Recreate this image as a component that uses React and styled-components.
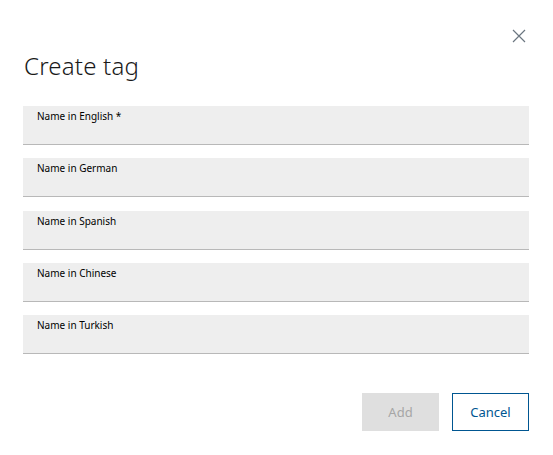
import styled, { createGlobalStyle } from "styled-components";

const GlobalStyle = createGlobalStyle`
  html, body {
    margin: 0;
    padding: 0;
    background: #ffffff;
    font-family: "Noto Sans", "Liberation Sans", sans-serif;
  }
`;

const Dialog = styled.div`
  width: 553px;
  height: 455px;
  box-sizing: border-box;
  padding: 24px 24px 0 23px;
  background: #ffffff;
  display: flex;
  flex-direction: column;
  position: relative;
`;

const CloseButton = styled.button`
  position: absolute;
  top: 28px;
  right: 26px;
  width: 16px;
  height: 16px;
  padding: 0;
  border: none;
  background: transparent;
  display: flex;
  align-items: center;
  justify-content: center;
  cursor: pointer;
`;

const Title = styled.h1`
  margin: 26px 0 0 1px;
  font-size: 24px;
  font-weight: 300;
  line-height: 32px;
  color: #1a1a1a;
  letter-spacing: 0.2px;
`;

const Form = styled.div`
  margin-top: 24px;
  display: flex;
  flex-direction: column;
  gap: 13.25px;
`;

const Field = styled.label`
  height: 39px;
  box-sizing: border-box;
  background: #eeeeee;
  border-bottom: 1px solid #b8b8b8;
  padding: 3px 14px 0;
  display: flex;
  flex-direction: column;
`;

const FieldLabel = styled.span`
  font-size: 10px;
  line-height: 14px;
  color: #000000;
`;

const Input = styled.input`
  border: none;
  background: transparent;
  outline: none;
  padding: 0;
  font: inherit;
  font-size: 12px;
`;

const Actions = styled.div`
  margin-top: 39px;
  display: flex;
  justify-content: flex-end;
  gap: 13px;
`;

const ActionButton = styled.button`
  width: 77px;
  height: 38px;
  box-sizing: border-box;
  font-family: "Noto Sans", "Liberation Sans", sans-serif;
  font-size: 13px;
  border: 1px solid ${(p) => (p.$primary ? "#dfdfdf" : "#005691")};
  background: ${(p) => (p.$primary ? "#dfdfdf" : "#ffffff")};
  color: ${(p) => (p.$primary ? "#a6a6a6" : "#005691")};
  cursor: ${(p) => (p.$primary ? "default" : "pointer")};
`;

const fields = [
  "Name in English *",
  "Name in German",
  "Name in Spanish",
  "Name in Chinese",
  "Name in Turkish",
];

const App = () => {
  return (
    <>
      <GlobalStyle />
      <Dialog>
        <CloseButton aria-label="Close">
          <svg width="14" height="14" viewBox="0 0 14 14">
            <path
              d="M1 1L13 13M13 1L1 13"
              stroke="#6b7680"
              strokeWidth="1.2"
              fill="none"
            />
          </svg>
        </CloseButton>
        <Title>Create tag</Title>
        <Form>
          {fields.map((name) => (
            <Field key={name}>
              <FieldLabel>{name}</FieldLabel>
              <Input />
            </Field>
          ))}
        </Form>
        <Actions>
          <ActionButton $primary disabled>
            Add
          </ActionButton>
          <ActionButton>Cancel</ActionButton>
        </Actions>
      </Dialog>
    </>
  );
};

export default App;
